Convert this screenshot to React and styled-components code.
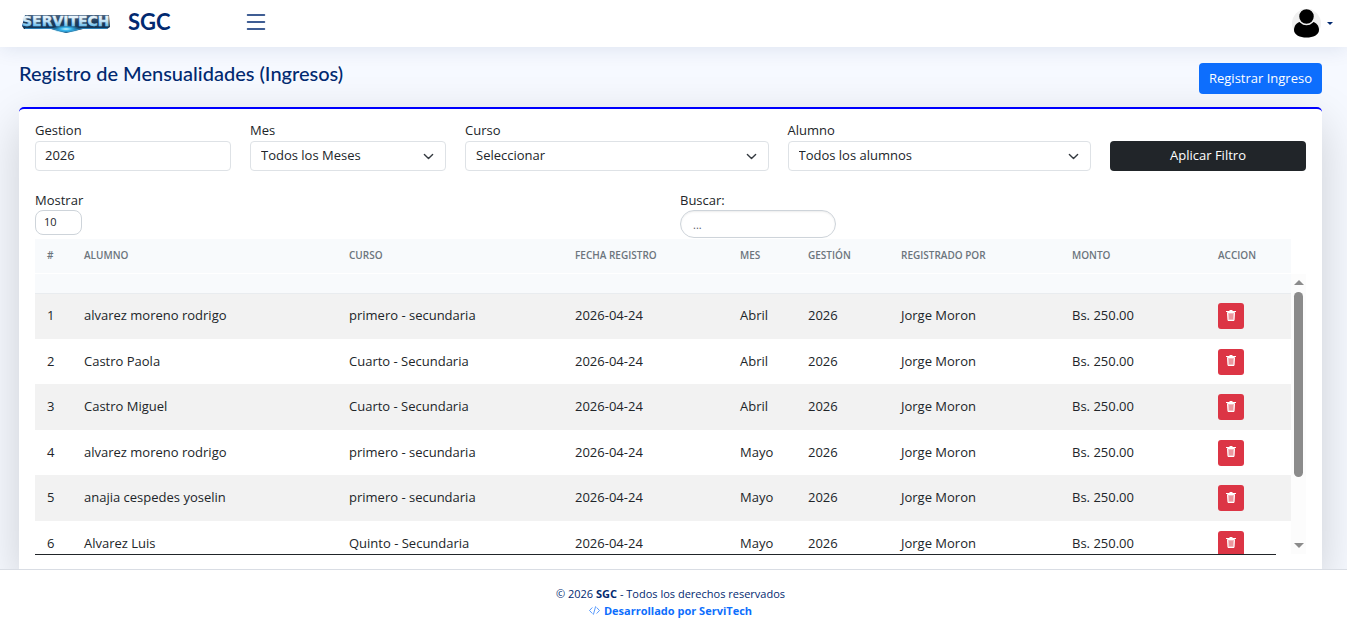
import styled, { createGlobalStyle } from 'styled-components';

const columns = [
  { title: '#', width: 37 },
  { title: 'Alumno', width: 265 },
  { title: 'Curso', width: 226 },
  { title: 'Fecha Registro', width: 165 },
  { title: 'Mes', width: 68 },
  { title: 'Gestión', width: 93 },
  { title: 'Registrado por', width: 171 },
  { title: 'Monto', width: 146 },
  { title: 'Accion', width: 85 },
];

const rows = [
  ['alvarez moreno rodrigo', 'primero - secundaria', 'Abril'],
  ['Castro Paola', 'Cuarto - Secundaria', 'Abril'],
  ['Castro Miguel', 'Cuarto - Secundaria', 'Abril'],
  ['alvarez moreno rodrigo', 'primero - secundaria', 'Mayo'],
  ['anajia cespedes yoselin', 'primero - secundaria', 'Mayo'],
  ['Alvarez Luis', 'Quinto - Secundaria', 'Mayo'],
];

function Logo() {
  return (
    <svg width="90" height="24" viewBox="0 0 90 24" role="img" aria-label="Servitech">
      <defs>
        <linearGradient id="letters" x1="0" y1="0" x2="0" y2="1">
          <stop offset="0.25" stopColor="#e8f4fb" />
          <stop offset="0.5" stopColor="#c4e4f5" />
          <stop offset="0.8" stopColor="#6fc0ec" />
        </linearGradient>
        <linearGradient id="plate" x1="0" y1="0" x2="0" y2="1">
          <stop offset="0" stopColor="#4a6480" />
          <stop offset="0.4" stopColor="#1d3b5a" />
          <stop offset="1" stopColor="#0a3357" />
        </linearGradient>
        <radialGradient id="glow">
          <stop offset="0" stopColor="#c8f8ff" />
          <stop offset="0.4" stopColor="#35b4ec" />
          <stop offset="1" stopColor="#35b4ec" stopOpacity="0" />
        </radialGradient>
      </defs>
      <path
        d="M4 5H88L89 17L86 19H62L45 23L30 19H3L1 16Z"
        fill="url(#plate)"
      />
      <path d="M4 18.500H31L45 22L61 18.500H86" stroke="#2b7fb4" fill="none" />
      <ellipse cx="45" cy="19" rx="14" ry="4" fill="url(#glow)" />
      <text
        x="1"
        y="16"
        fontFamily="DejaVu Sans, sans-serif"
        fontSize="14"
        fontWeight="700"
        fill="url(#letters)"
        stroke="url(#letters)"
        strokeWidth="0.4"
      >
        SERVITECH
      </text>
    </svg>
  );
}

function Avatar() {
  return (
    <svg width="29" height="29" viewBox="0 0 29 29" aria-hidden="true">
      <circle cx="14.5" cy="14.5" r="14.5" fill="#f0f0f0" />
      <path
        d="M8 13C4.500 13.500 2 17 2 21C2 26 8 28.500 14.500 28.500S27 26 27 21C27 17 24.500 13.500 21 13Z"
        fill="#000"
      />
      <circle cx="14.5" cy="7.5" r="8" fill="#000" stroke="#f0f0f0" strokeWidth="1.500" />
    </svg>
  );
}

function TrashIcon() {
  return (
    <svg width="10" height="11" viewBox="0 0 10 11" fill="none" stroke="currentColor" aria-hidden="true">
      <path d="M1.500 2.500L2 10.500H8L8.500 2.500Z" fill="#f3b9bf" />
      <path d="M0 1.500H10M3.500 0.500H6.500" />
      <path d="M4 4V9M6 4V9" stroke="#e2626f" strokeWidth="0.800" />
    </svg>
  );
}

function Columns() {
  return (
    <colgroup>
      {columns.map((c) => (
        <Col key={c.title} $width={c.width} />
      ))}
    </colgroup>
  );
}

export default function App() {
  return (
    <Page>
      <GlobalStyle />
      <Header>
        <Brand href="#">
          <Logo />
          <BrandName>SGC</BrandName>
        </Brand>
        <MenuButton type="button" aria-label="Menu">
          <svg width="20" height="18" viewBox="0 0 20 18" aria-hidden="true">
            <path
              d="M1.500 2H18.500M1.500 9H18.500M1.500 16H18.500"
              stroke="currentColor"
              strokeWidth="1.500"
              strokeLinecap="round"
            />
          </svg>
        </MenuButton>
        <Profile type="button" aria-label="Perfil">
          <Avatar />
          <Caret />
        </Profile>
      </Header>

      <Main>
        <TitleBar>
          <Title>Registro de Mensualidades (Ingresos)</Title>
          <PrimaryButton type="button">Registrar Ingreso</PrimaryButton>
        </TitleBar>

        <Card>
          <Filters>
            <Field $span={2}>
              <label htmlFor="gestion">Gestion</label>
              <Input id="gestion" defaultValue="2026" />
            </Field>
            <Field $span={2}>
              <label htmlFor="mes">Mes</label>
              <Select id="mes">
                <option>Todos los Meses</option>
              </Select>
            </Field>
            <Field $span={3}>
              <label htmlFor="curso">Curso</label>
              <Select id="curso">
                <option>Seleccionar</option>
              </Select>
            </Field>
            <Field $span={3}>
              <label htmlFor="alumno">Alumno</label>
              <Select id="alumno">
                <option>Todos los alumnos</option>
              </Select>
            </Field>
            <Field $span={2}>
              <DarkButton type="button">Aplicar Filtro</DarkButton>
            </Field>
          </Filters>

          <TableTools>
            <Tool>
              <label htmlFor="mostrar">Mostrar</label>
              <LengthSelect id="mostrar">
                <option>10</option>
              </LengthSelect>
            </Tool>
            <Tool>
              <label htmlFor="buscar">Buscar:</label>
              <Search id="buscar" type="search" placeholder="..." />
            </Tool>
          </TableTools>

          <HeadWrap>
            <Table>
              <Columns />
              <thead>
                <tr>
                  {columns.map((c) => (
                    <Th key={c.title} scope="col">
                      {c.title}
                    </Th>
                  ))}
                </tr>
              </thead>
            </Table>
          </HeadWrap>
          <Scroller>
            <ScrollBody>
              <Table>
                <Columns />
                <tbody>
                  <SpacerRow aria-hidden="true">
                    <td colSpan={columns.length} />
                  </SpacerRow>
                  {rows.map(([alumno, curso, mes], i) => (
                    <Row key={i}>
                      <Td>{i + 1}</Td>
                      <Td>{alumno}</Td>
                      <Td>{curso}</Td>
                      <Td>2026-04-24</Td>
                      <Td>{mes}</Td>
                      <Td>2026</Td>
                      <Td>Jorge Moron</Td>
                      <Td>Bs. 250.00</Td>
                      <ActionTd>
                        <DeleteButton type="button" aria-label="Eliminar">
                          <TrashIcon />
                        </DeleteButton>
                      </ActionTd>
                    </Row>
                  ))}
                </tbody>
              </Table>
            </ScrollBody>
            <ScrollTrack>
              <ScrollArrow />
              <ScrollThumb />
              <ScrollArrow $down />
            </ScrollTrack>
          </Scroller>
          <TableEnd />
        </Card>
      </Main>

      <Footer>
        <div>
          © 2026 <strong>SGC</strong> - Todos los derechos reservados
        </div>
        <FooterLink href="#">
          <svg width="11" height="11" viewBox="0 0 16 16" fill="none" stroke="currentColor" aria-hidden="true">
            <path
              d="M4.500 4L0.800 8L4.500 12M11.500 4L15.200 8L11.500 12M9.500 2.500L6.500 13.500"
              strokeLinecap="round"
              strokeLinejoin="round"
            />
          </svg>
          Desarrollado por ServiTech
        </FooterLink>
      </Footer>
    </Page>
  );
}

const GlobalStyle = createGlobalStyle`
  *, *::before, *::after {
    box-sizing: border-box;
  }

  body {
    margin: 0;
    background: #f6f9ff;
    color: #212529;
    font-family: 'Open Sans', sans-serif;
    font-size: 13px;
    line-height: 20px;
  }

  button, input, select {
    font: inherit;
    color: inherit;
  }
`;

const Page = styled.div`
  display: flex;
  flex-direction: column;
  min-height: 100vh;
`;

const Header = styled.header`
  z-index: 1;
  display: flex;
  align-items: center;
  height: 47px;
  padding: 0 14px 3px 21px;
  background: #fff;
  box-shadow: 0 2px 20px rgba(1, 41, 112, 0.1);
`;

const Brand = styled.a`
  display: flex;
  align-items: center;
  gap: 17px;
  width: 225px;
  color: #012970;
  text-decoration: none;
`;

const BrandName = styled.span`
  font-family: Lato, sans-serif;
  font-size: 22px;
  font-weight: 700;
  line-height: 26px;
`;

const MenuButton = styled.button`
  display: flex;
  padding: 0;
  border: 0;
  background: none;
  color: #012970;
`;

const Profile = styled.button`
  display: flex;
  align-items: center;
  gap: 6px;
  margin-left: auto;
  padding: 3px 0 0;
  border: 0;
  background: none;
  color: #012970;
`;

const Caret = styled.span`
  border-top: 3px solid;
  border-right: 3px solid transparent;
  border-left: 3px solid transparent;
`;

const Main = styled.main`
  padding: 16px 25px 0 19px;
`;

const TitleBar = styled.div`
  display: flex;
  align-items: flex-start;
  justify-content: space-between;
  margin-bottom: 13px;
`;

const Title = styled.h1`
  margin: 0;
  color: #012970;
  font-family: Lato, sans-serif;
  font-size: 20px;
  font-weight: 500;
  line-height: 20px;
`;

const PrimaryButton = styled.button`
  height: 31px;
  padding: 0 10px 2px;
  border: 0;
  border-radius: 4px;
  background: #0d6efd;
  color: #fff;
`;

const Card = styled.section`
  padding: 11px 16px 14px;
  border-top: 2px solid #0000ff;
  border-radius: 5px 5px 0 0;
  background: #fff;
  box-shadow: 0 16px 48px rgba(0, 0, 0, 0.175);
`;

const Filters = styled.div`
  display: grid;
  grid-template-columns: repeat(12, 1fr);
  column-gap: 19px;
`;

const Field = styled.div`
  grid-column: span ${(p) => p.$span};
  display: flex;
  flex-direction: column;
  justify-content: flex-end;
  gap: 1px;
`;

const Input = styled.input`
  width: 100%;
  height: 30px;
  padding: 0 9px 2px;
  border: 1px solid #dee2e6;
  border-radius: 4px;
  background: #fff;
`;

const Select = styled.select`
  width: 100%;
  height: 30px;
  padding: 0 30px 2px 10px;
  border: 1px solid #dee2e6;
  border-radius: 4px;
  appearance: none;
  background: #fff
    url("data:image/svg+xml,%3csvg xmlns='http://www.w3.org/2000/svg' viewBox='0 0 16 16'%3e%3cpath fill='none' stroke='%23343a40' stroke-linecap='round' stroke-linejoin='round' stroke-width='2' d='m2 5 6 6 6-6'/%3e%3c/svg%3e")
    no-repeat right 11px center / 11px 11px;
`;

const DarkButton = styled.button`
  height: 30px;
  padding: 0 10px 2px;
  border: 0;
  border-radius: 4px;
  background: #212529;
  color: #fff;
`;

const TableTools = styled.div`
  display: grid;
  grid-template-columns: 1fr 1fr;
  column-gap: 19px;
  margin-top: 19px;
`;

const Tool = styled.div`
  display: flex;
  flex-direction: column;
  align-items: flex-start;
`;

const LengthSelect = styled.select`
  width: 47px;
  height: 25px;
  padding: 0 8px 2px;
  border: 1px solid #ced4da;
  border-radius: 8px;
  appearance: none;
  background: #fff;
  font-size: 11px;
`;

const Search = styled.input`
  width: 156px;
  height: 28px;
  padding: 0 12px;
  border: 1px solid #ced4da;
  border-radius: 14px;
  background: #fff;
  box-shadow: inset 0 1px 2px rgba(0, 0, 0, 0.075);
  font-size: 11px;

  &::placeholder {
    color: #595c5f;
  }
`;

const HeadWrap = styled.div`
  margin-top: 1px;
  padding-right: 15px;
`;

const Table = styled.table`
  width: 100%;
  table-layout: fixed;
  border-collapse: collapse;
`;

const Col = styled.col`
  width: ${(p) => p.$width}px;
`;

const Th = styled.th`
  height: 34px;
  padding: 0 12px 2px;
  background: #f8fafc;
  color: #6c757d;
  font-size: 10px;
  font-weight: 600;
  text-align: left;
  text-transform: uppercase;
  white-space: nowrap;
`;

const Scroller = styled.div`
  display: flex;
  height: 280px;
  margin-top: 1px;
`;

const ScrollBody = styled.div`
  flex: 1;
  overflow: hidden;
`;

const SpacerRow = styled.tr`
  height: 19px;
  background: #f8fafc;

  td {
    padding: 0;
    border-bottom: 1px solid #e9ecef;
  }
`;

const Row = styled.tr`
  height: 45px;
  background: #fff;

  &:nth-child(even) {
    height: 46px;
    background: #f2f2f2;
  }
`;

const Td = styled.td`
  padding: 0 12px 2px;
  white-space: nowrap;
`;

const ActionTd = styled(Td)`
  padding-bottom: 0;
`;

const DeleteButton = styled.button`
  display: flex;
  align-items: center;
  justify-content: center;
  width: 26px;
  height: 26px;
  padding: 0 0 2px;
  border: 0;
  border-radius: 3px;
  background: #dc3545;
  color: #fff;
`;

const ScrollTrack = styled.div`
  display: flex;
  flex-direction: column;
  align-items: center;
  width: 15px;
  padding: 6px 0;
  background: #fcfcfc;
`;

const ScrollArrow = styled.span`
  margin-top: ${(p) => (p.$down ? 'auto' : '0')};
  border: 0 solid transparent;
  border-width: 0 5px;
  ${(p) => (p.$down ? 'border-top' : 'border-bottom')}: 5px solid #8b8b8b;
`;

const ScrollThumb = styled.span`
  width: 9px;
  height: 185px;
  margin-top: 7px;
  border-radius: 5px;
  background: #8b8b8b;
`;

const TableEnd = styled.div`
  height: 1px;
  margin-right: 30px;
  background: #212529;
`;

const Footer = styled.footer`
  z-index: 1;
  flex: 1;
  padding: 15px 6px 15px 0;
  border-top: 1px solid #d9dde4;
  background: #fff;
  color: #012970;
  font-size: 11px;
  line-height: 17px;
  text-align: center;
`;

const FooterLink = styled.a`
  display: inline-flex;
  align-items: center;
  gap: 4px;
  color: #0d6efd;
  font-weight: 700;
  text-decoration: none;
`;
